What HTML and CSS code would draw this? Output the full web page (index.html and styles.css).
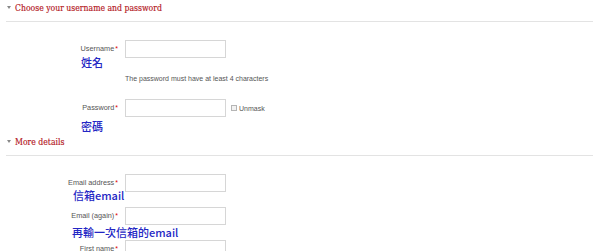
FILE: index.html
```html
<!DOCTYPE html>
<html>
<head>
<meta charset="utf-8">
<link rel="stylesheet" href="styles.css">
</head>
<body>
<section class="fs fs-first">
  <div class="legend"><span class="tri"></span>Choose your username and password</div>
  <div class="fs-body">
    <div class="row">
      <div class="lbl-col">
        <div class="lbl">Username<span class="req">*</span></div>
        <div class="note note-user">姓名</div>
      </div>
      <div class="field"><span class="input"></span></div>
    </div>
    <div class="help">The password must have at least 4 characters</div>
    <div class="row row-pass">
      <div class="lbl-col">
        <div class="lbl">Password<span class="req">*</span></div>
        <div class="note note-pass">密碼</div>
      </div>
      <div class="field"><span class="input"></span><span class="chk"></span><span class="unmask">Unmask</span></div>
    </div>
  </div>
</section>
<section class="fs fs-second">
  <div class="legend"><span class="tri"></span>More details</div>
  <div class="fs-body">
    <div class="row">
      <div class="lbl-col">
        <div class="lbl">Email address<span class="req">*</span></div>
        <div class="note note-email">信箱email</div>
      </div>
      <div class="field"><span class="input"></span></div>
    </div>
    <div class="row row-again">
      <div class="lbl-col">
        <div class="lbl">Email (again)<span class="req">*</span></div>
        <div class="note note-again">再輸一次信箱的email</div>
      </div>
      <div class="field"><span class="input"></span></div>
    </div>
    <div class="row row-first">
      <div class="lbl-col">
        <div class="lbl">First name<span class="req">*</span></div>
      </div>
      <div class="field"><span class="input"></span></div>
    </div>
  </div>
</section>
</body>
</html>
```

FILE: styles.css
```css
html, body {
  margin: 0;
  padding: 0;
  background: #fff;
  overflow: hidden;
}
body {
  font-family: "Liberation Sans", Arial, sans-serif;
  color: #555;
}
.fs {
  margin: 0;
}
.fs-second {
  margin-top: 2px;
}
.legend {
  box-sizing: border-box;
  line-height: 16px;
  margin: 0 7px 0 6px;
  border-bottom: 1px solid #e3e3e3;
  font-family: "DejaVu Serif Condensed", "DejaVu Serif", serif;
  font-stretch: condensed;
  font-size: 8.6px;
  color: #b3161c;
  -webkit-text-stroke: 0.15px #b3161c;
  display: flex;
  align-items: center;
  height: 22px;
  padding-bottom: 6px;
}
.tri {
  width: 0;
  height: 0;
  border-left: 2.5px solid transparent;
  border-right: 2.5px solid transparent;
  border-top: 3px solid #888;
  margin: 0 4px 0 1px;
}
.fs-body {
  padding-top: 18px;
}
.row {
  display: flex;
  align-items: flex-start;
}
.lbl-col {
  width: 118px;
  flex: none;
}
.lbl {
  height: 18px;
  line-height: 18px;
  font-size: 7.3px;
  text-align: right;
  white-space: nowrap;
  color: #555;
}
.req {
  color: #d00;
  font-size: 7px;
  margin-left: 1px;
}
.note {
  font-family: "Noto Sans CJK TC", "Noto Sans", sans-serif;
  font-size: 11px;
  line-height: 12px;
  font-weight: 500;
  color: #2326c4;
  white-space: nowrap;
}
.note-user { margin-top: -2px; padding-left: 81px; }
.note-pass { margin-top: 3px; padding-left: 81px; }
.note-email { margin-top: -3px; padding-left: 73px; }
.note-again { margin-top: 1px; padding-left: 72px; }
.field {
  margin-left: 7px;
  display: flex;
  align-items: center;
  height: 18px;
}
.input {
  display: block;
  width: 101px;
  height: 18px;
  box-sizing: border-box;
  border: 1px solid #d6d6d6;
  background: #fff;
}
.chk {
  display: block;
  width: 6px;
  height: 6px;
  box-sizing: border-box;
  border: 1px solid #b5b5b5;
  background: #f2f2f2;
  margin-left: 5px;
}
.unmask {
  font-size: 7px;
  margin-left: 2px;
  color: #555;
}
.help {
  margin: 6px 0 0 125px;
  font-size: 7px;
  line-height: 10px;
  color: #555;
  white-space: nowrap;
}
.row-pass {
  margin-top: 15px;
}
.row-again {
  margin-top: 6px;
}
.row-first {
  margin-top: 2px;
}
```
